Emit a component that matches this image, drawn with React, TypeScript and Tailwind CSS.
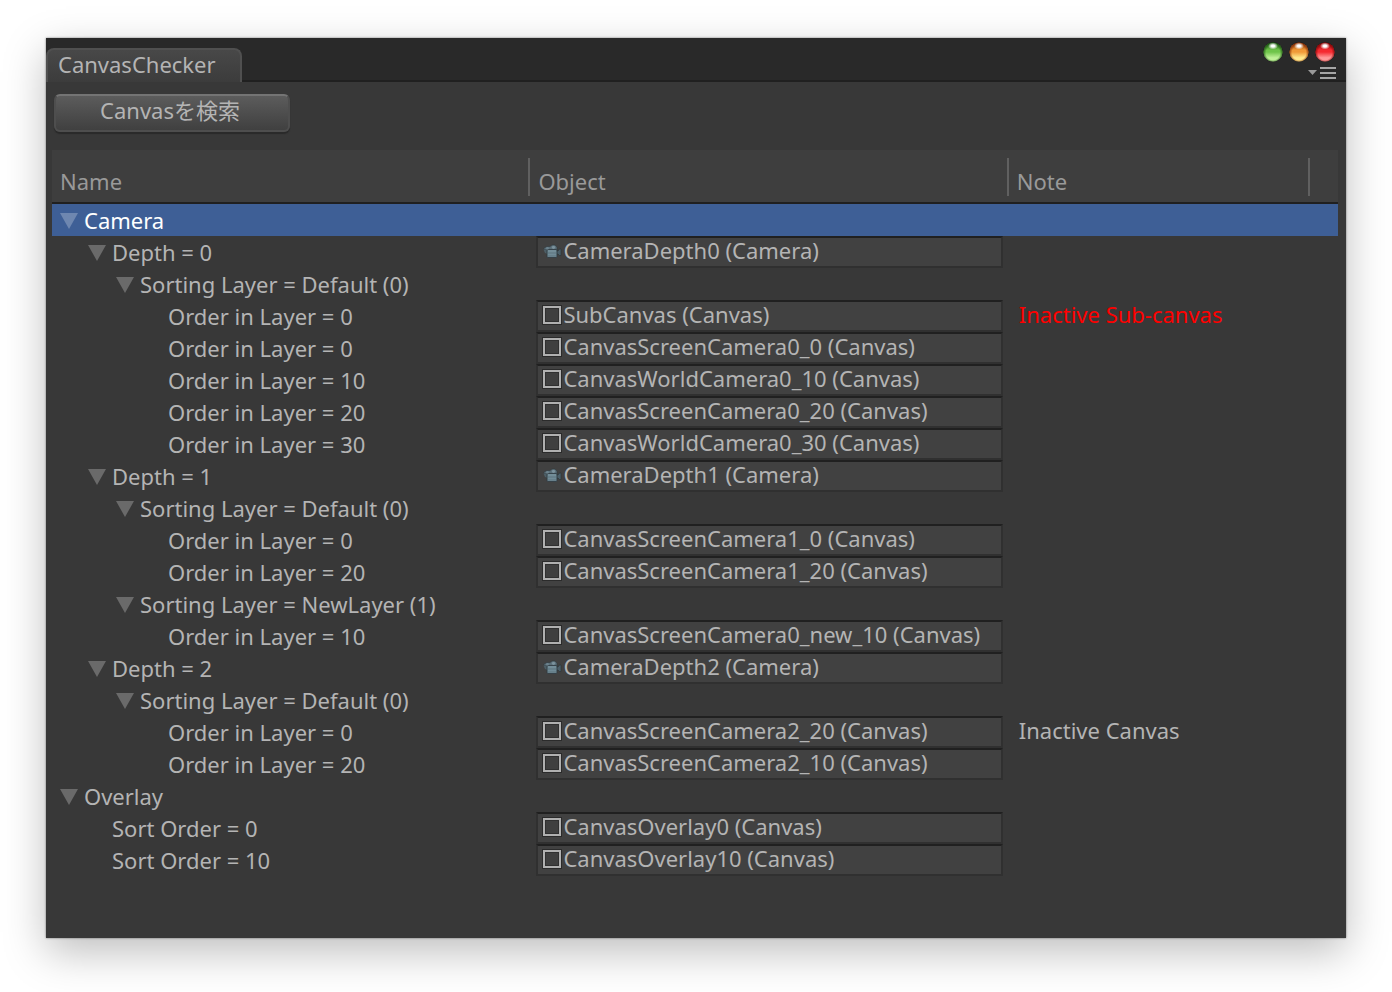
import { useState } from "react";

type Kind = "camera" | "canvas";

interface Row {
  depth: number;
  label: string;
  group?: boolean;
  object?: string;
  kind?: Kind;
  note?: string;
  warn?: boolean;
}

const canvas = (depth: number, label: string, name: string, note?: string, warn?: boolean): Row => ({
  depth,
  label,
  object: `${name} (Canvas)`,
  kind: "canvas",
  note,
  warn,
});

const camera = (label: string, name: string): Row => ({
  depth: 1,
  label,
  group: true,
  object: `${name} (Camera)`,
  kind: "camera",
});

const group = (depth: number, label: string): Row => ({ depth, label, group: true });

const rows: Row[] = [
  group(0, "Camera"),
  camera("Depth = 0", "CameraDepth0"),
  group(2, "Sorting Layer = Default (0)"),
  canvas(3, "Order in Layer = 0", "SubCanvas", "Inactive Sub-canvas", true),
  canvas(3, "Order in Layer = 0", "CanvasScreenCamera0_0"),
  canvas(3, "Order in Layer = 10", "CanvasWorldCamera0_10"),
  canvas(3, "Order in Layer = 20", "CanvasScreenCamera0_20"),
  canvas(3, "Order in Layer = 30", "CanvasWorldCamera0_30"),
  camera("Depth = 1", "CameraDepth1"),
  group(2, "Sorting Layer = Default (0)"),
  canvas(3, "Order in Layer = 0", "CanvasScreenCamera1_0"),
  canvas(3, "Order in Layer = 20", "CanvasScreenCamera1_20"),
  group(2, "Sorting Layer = NewLayer (1)"),
  canvas(3, "Order in Layer = 10", "CanvasScreenCamera0_new_10"),
  camera("Depth = 2", "CameraDepth2"),
  group(2, "Sorting Layer = Default (0)"),
  canvas(3, "Order in Layer = 0", "CanvasScreenCamera2_20", "Inactive Canvas"),
  canvas(3, "Order in Layer = 20", "CanvasScreenCamera2_10"),
  group(0, "Overlay"),
  canvas(1, "Sort Order = 0", "CanvasOverlay0"),
  canvas(1, "Sort Order = 10", "CanvasOverlay10"),
];

const indents = ["pl-2", "pl-9", "pl-16", "pl-[92px]"];

function Light({ id, rim, mid, low }: { id: string; rim: string; mid: string; low: string }) {
  return (
    <button type="button" aria-label={id} className="block size-5">
      <svg viewBox="0 0 20 20" className="size-5" aria-hidden="true">
        <defs>
          <linearGradient id={`${id}-body`} x1="0" y1="0" x2="0" y2="1">
            <stop offset="0" stopColor={rim} />
            <stop offset="0.4" stopColor={mid} />
            <stop offset="0.5" stopColor={mid} />
            <stop offset="0.8" stopColor={low} />
          </linearGradient>
          <radialGradient id={`${id}-edge`} cx="0.5" cy="0.55" r="0.52">
            <stop offset="0.7" stopColor={rim} stopOpacity="0" />
            <stop offset="1" stopColor={rim} stopOpacity="0.9" />
          </radialGradient>
          <radialGradient id={`${id}-shine`}>
            <stop offset="0.3" stopColor="#fff" />
            <stop offset="1" stopColor="#fff" stopOpacity="0" />
          </radialGradient>
        </defs>
        <circle cx="10" cy="10" r="10" fill="#1c1c1c" />
        <circle cx="10" cy="10" r="9.5" fill={`url(#${id}-body)`} />
        <circle cx="10" cy="10" r="9.5" fill={`url(#${id}-edge)`} />
        <ellipse cx="10" cy="4" rx="5" ry="3.5" fill={`url(#${id}-shine)`} />
      </svg>
    </button>
  );
}

function CameraIcon() {
  return (
    <svg viewBox="0 0 20 20" className="size-5 shrink-0" aria-hidden="true">
      <path d="M2 7L5 5.500H8L10 4H13L15 6V9H5L2 8.500z" fill="#5a6e78" stroke="#30393e" strokeWidth="0.6" />
      <path d="M1.500 8.500H5.500V13L3 12z" fill="#4d5e66" />
      <path d="M14 10H16L17.500 8H19V14.500H17.500L16 13H14z" fill="#4b5e68" stroke="#2a3338" strokeWidth="0.6" />
      <rect x="5" y="8.500" width="10" height="8" rx="1" fill="#67808b" stroke="#2f3a40" strokeWidth="0.8" />
      <path d="M6 10h8" stroke="#809aa5" />
      <path d="M6 13.500h8" stroke="#708b97" />
      <circle cx="11.500" cy="6.300" r="1.600" fill="#7b929d" />
      <circle cx="5.500" cy="7.300" r="1.300" fill="#6d838e" />
    </svg>
  );
}

function CanvasIcon() {
  return (
    <svg viewBox="0 0 20 20" className="size-5 shrink-0" aria-hidden="true">
      <rect x="1" y="1" width="18" height="18" fill="none" stroke="#2b2b2b" strokeWidth="2" />
      <rect x="2" y="2" width="16" height="16" fill="#3f3f3f" stroke="#b0b0b0" strokeWidth="2" />
      <rect x="3.5" y="3.5" width="13" height="13" fill="none" stroke="#303030" />
    </svg>
  );
}

function Foldout({ open }: { open: boolean }) {
  return (
    <svg
      viewBox="0 0 18 18"
      className={open ? "size-[18px] shrink-0" : "size-[18px] shrink-0 -rotate-90"}
      aria-hidden="true"
    >
      <path d="M0 2h18L9 18z" fill="#fff" fillOpacity="0.25" />
    </svg>
  );
}

export default function App() {
  const [closed, setClosed] = useState<number[]>([]);
  const [selected, setSelected] = useState(0);

  const toggle = (i: number) =>
    setClosed((c) => (c.includes(i) ? c.filter((n) => n !== i) : [...c, i]));

  const isHidden = (i: number) => {
    let level = rows[i].depth;
    for (let j = i - 1; j >= 0; j--) {
      if (rows[j].depth < level) {
        if (closed.includes(j)) return true;
        level = rows[j].depth;
      }
    }
    return false;
  };

  return (
    <div className="flex min-h-screen flex-col bg-white px-[46px] pt-[38px] pb-[54px] font-['Noto_Sans','Noto_Sans_CJK_JP',sans-serif] text-[22px] leading-7 text-[#b4b4b4]">
      <main className="flex grow flex-col bg-[#383838] shadow-[0_0_2px_rgba(0,0,0,0.5),0_14px_40px_rgba(0,0,0,0.26)]">
        <header className="flex h-11 justify-between border-b-2 border-[#202020] bg-[#292929]">
          <h1 className="mt-2.5 -mb-0.5 w-[196px] rounded-t-lg border-2 border-b-0 border-[#505050] bg-linear-to-b from-[#484848] to-[#3c3c3c] pl-2.5">
            CanvasChecker
          </h1>
          <div className="flex flex-col items-end pt-1 pr-2.5">
            <div className="flex gap-1.5 pr-px">
              <Light id="Minimize" rim="#1f5a14" mid="#6fc44a" low="#c0f098" />
              <Light id="Zoom" rim="#8a3208" mid="#f09a38" low="#ffe98c" />
              <Light id="Close" rim="#8a0808" mid="#f52a30" low="#ff9a9a" />
            </div>
            <button type="button" aria-label="Window menu" className="mt-[5px]">
              <svg viewBox="0 0 28 12" className="h-3 w-7" aria-hidden="true">
                <path d="M0 3h9L4.500 8z" fill="#9a9a9a" />
                <path d="M12 1h16M12 6h16M12 11h16" stroke="#a6a6a6" strokeWidth="2" />
              </svg>
            </button>
          </div>
        </header>

        <div className="px-2 pt-3 pb-[18px]">
          <button
            type="button"
            className="block h-[38px] w-[236px] rounded-md border-2 border-[#4e4e4e] border-t-[#747474] bg-linear-to-b from-[#5c5c5c] to-[#404040] pr-1 pb-1.5 shadow-[0_2px_1px_#2a2a2a]"
          >
            Canvasを検索
          </button>
        </div>

        <div className="pr-2 pl-1.5">
          <table className="w-full table-fixed border-separate border-spacing-0 text-left">
            <colgroup>
              <col className="w-[37.2%]" />
              <col className="w-[37.2%]" />
              <col className="w-[23.4%]" />
              <col />
            </colgroup>
            <thead className="bg-[#3e3e3e] text-[#999999]">
              <tr className="h-[54px]">
                {["Name", "Object", "Note"].map((h) => (
                  <th
                    key={h}
                    scope="col"
                    className="border-b-2 border-[#202020] p-0 pb-1.5 align-bottom font-normal"
                  >
                    <div className="flex h-[38px] items-end border-r-2 border-[#606060] pb-px pl-2">{h}</div>
                  </th>
                ))}
                <td className="border-b-2 border-[#202020]" />
              </tr>
            </thead>
            <tbody>
              {rows.map((row, i) =>
                isHidden(i) ? null : (
                  <tr
                    key={i}
                    onClick={() => setSelected(i)}
                    className={selected === i ? "h-8 bg-[#3e5f96] text-white" : "h-8"}
                  >
                    <td className={`p-0 whitespace-nowrap ${indents[row.depth]}`}>
                      {row.group ? (
                        <button
                          type="button"
                          aria-expanded={!closed.includes(i)}
                          onClick={() => toggle(i)}
                          className="flex items-center gap-1.5"
                        >
                          <Foldout open={!closed.includes(i)} />
                          {row.label}
                        </button>
                      ) : (
                        <span className="block pl-6">{row.label}</span>
                      )}
                    </td>
                    <td className="py-0 pr-1.5 pl-1.5">
                      {row.object && (
                        <button
                          type="button"
                          className="flex h-8 w-full items-center border-2 border-[#303030] border-t-[#202020] bg-[#414141] pb-0.5 pl-1 whitespace-nowrap"
                        >
                          {row.kind === "camera" ? <CameraIcon /> : <CanvasIcon />}
                          <span className="pb-0.5 pl-px">{row.object}</span>
                        </button>
                      )}
                    </td>
                    <td className={row.warn ? "p-0 pb-1 pl-2.5 text-[#ff0000]" : "p-0 pb-1 pl-2.5"}>
                      {row.note}
                    </td>
                    <td />
                  </tr>
                ),
              )}
            </tbody>
          </table>
        </div>
      </main>
    </div>
  );
}
